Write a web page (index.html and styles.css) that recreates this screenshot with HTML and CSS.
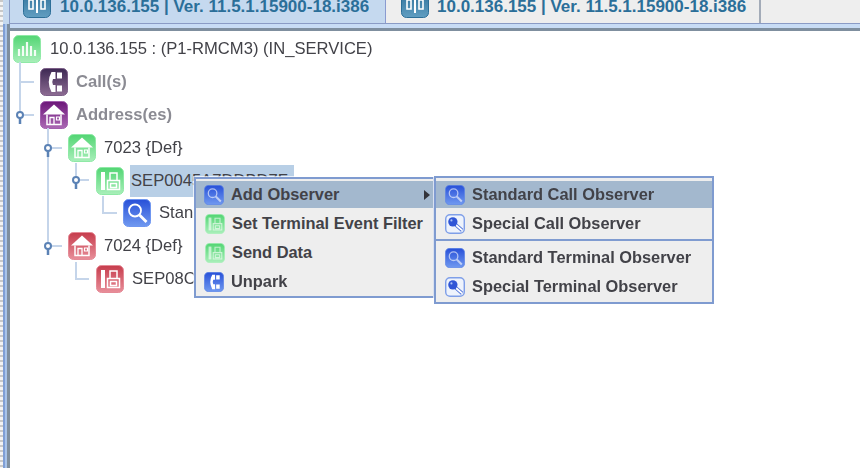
FILE: index.html
```html
<!DOCTYPE html>
<html lang="en">
<head>
<meta charset="utf-8">
<title>10.0.136.155</title>
<link rel="stylesheet" href="styles.css">
</head>
<body>
<svg class="defs" width="0" height="0" aria-hidden="true">
  <defs>
    <linearGradient id="g-green" x1="0" y1="0" x2="0" y2="1"><stop offset="0" stop-color="#52d573"/><stop offset="1" stop-color="#a9efba"/></linearGradient>
    <linearGradient id="g-dusk" x1="0" y1="0" x2="0" y2="1"><stop offset="0" stop-color="#3d2853"/><stop offset="1" stop-color="#8d6c93"/></linearGradient>
    <linearGradient id="g-purple" x1="0" y1="0" x2="0" y2="1"><stop offset="0" stop-color="#6c1679"/><stop offset="1" stop-color="#ab69b4"/></linearGradient>
    <linearGradient id="g-red" x1="0" y1="0" x2="0" y2="1"><stop offset="0" stop-color="#c63c4c"/><stop offset="1" stop-color="#e88f9a"/></linearGradient>
    <linearGradient id="g-blue" x1="0" y1="0" x2="0" y2="1"><stop offset="0" stop-color="#2850d8"/><stop offset="1" stop-color="#7099f0"/></linearGradient>
    <linearGradient id="g-teal" x1="0" y1="0" x2="0" y2="1"><stop offset="0" stop-color="#2d6f98"/><stop offset="1" stop-color="#619ec1"/></linearGradient>
    <symbol id="chart" viewBox="0 0 28 28">
      <path d="M6 14v7M10 11v10M14 7v14M18 11v10M22 15v6" fill="none" stroke="#fff" stroke-opacity=".9" stroke-width="2.200"/>
    </symbol>
    <symbol id="chart-boxed" viewBox="0 0 28 28">
      <path d="M6 10h4v9H6zM18 10h4v9h-4z" fill="none" stroke="#fff" stroke-width="1.600"/>
      <path d="M14 5v18" stroke="#fff" stroke-width="2"/>
    </symbol>
    <symbol id="phone" viewBox="0 0 28 28">
      <path d="M11.500 4h4v7h-2.500q-1.500 3 0 6h2.500v7h-4q-5.500-10 0-20z" fill="#fff"/>
      <path d="M17 4.500h5v6h-5zM17 17.500h5v6h-5z" fill="#fff"/>
    </symbol>
    <symbol id="house" viewBox="0 0 28 28">
      <path d="M14 3.500 25 13.500H3z" fill="#fff"/>
      <path d="M7 13.500v10h14v-10" fill="none" stroke="#fff" stroke-width="1.500"/>
      <path d="M10 23.500v-7h4v7" fill="none" stroke="#fff" stroke-width="1.300"/>
      <path d="M16.500 16h3v3h-3z" fill="none" stroke="#fff" stroke-width="1.200"/>
    </symbol>
    <symbol id="device" viewBox="0 0 28 28">
      <path d="M5 5h4v18H5z" fill="#fff"/>
      <path d="M11.500 13.500h12v9h-12zM14 13V6h7v7M14.500 16.500h6v4h-6z" fill="none" stroke="#fff" stroke-width="1.500"/>
    </symbol>
    <symbol id="search" viewBox="0 0 28 28">
      <circle cx="12" cy="11.500" r="6" fill="none" stroke="#fff" stroke-width="1.800"/>
      <path d="M16.500 16 23.500 23" stroke="#fff" stroke-width="2.800"/>
    </symbol>
    <symbol id="key-search" viewBox="0 0 28 28">
      <path d="M15 15 24 23" stroke="#4a6fd8" stroke-width="5"/>
      <path d="M15 15 24 23" stroke="#fff" stroke-width="2.600"/>
      <circle cx="11" cy="11" r="6.500" fill="#2f55d6"/>
      <circle cx="9" cy="9" r="1.500" fill="#a9c0f5"/>
    </symbol>
  </defs>
</svg>

<div class="app">
  <div class="rail"></div>
  <div class="main">
    <div class="tabs">
      <div class="tab tab-active">
        <svg class="icon" viewBox="0 0 28 28"><rect x=".5" y=".5" width="27" height="27" rx="5" fill="url(#g-teal)" stroke="#2d6f98"/><use href="#chart-boxed"/></svg>
        <span class="tab-text">10.0.136.155 | Ver. 11.5.1.15900-18.i386</span>
      </div>
      <div class="tab tab-idle">
        <svg class="icon" viewBox="0 0 28 28"><rect x=".5" y=".5" width="27" height="27" rx="5" fill="url(#g-teal)" stroke="#2d6f98"/><use href="#chart-boxed"/></svg>
        <span class="tab-text">10.0.136.155 | Ver. 11.5.1.15900-18.i386</span>
      </div>
    </div>
    <div class="band"></div>

    <div class="tree">
      <div class="row row-root">
        <svg class="icon" viewBox="0 0 28 28"><rect x=".5" y=".5" width="27" height="27" rx="5" fill="url(#g-green)" stroke="#8fe9a6"/><use href="#chart"/></svg>
        <span class="label">10.0.136.155 : (P1-RMCM3) (IN_SERVICE)</span>
      </div>
      <div class="row depth-1">
        <svg class="icon" viewBox="0 0 28 28"><rect x=".5" y=".5" width="27" height="27" rx="5" fill="url(#g-dusk)" stroke="#7d5f88"/><use href="#phone"/></svg>
        <span class="label label-group">Call(s)</span>
      </div>
      <div class="row depth-1">
        <svg class="icon" viewBox="0 0 28 28"><rect x=".5" y=".5" width="27" height="27" rx="5" fill="url(#g-purple)" stroke="#a25fae"/><use href="#house"/></svg>
        <span class="label label-group">Address(es)</span>
      </div>
      <div class="row depth-2">
        <svg class="icon" viewBox="0 0 28 28"><rect x=".5" y=".5" width="27" height="27" rx="5" fill="url(#g-green)" stroke="#8fe9a6"/><use href="#house"/></svg>
        <span class="label">7023 {Def}</span>
      </div>
      <div class="row depth-3">
        <svg class="icon" viewBox="0 0 28 28"><rect x=".5" y=".5" width="27" height="27" rx="5" fill="url(#g-green)" stroke="#8fe9a6"/><use href="#device"/></svg>
        <span class="label label-selected">SEP0045A7DDBD7F</span>
      </div>
      <div class="row depth-4">
        <svg class="icon" viewBox="0 0 28 28"><rect x=".5" y=".5" width="27" height="27" rx="5" fill="url(#g-blue)" stroke="#6f96f0"/><use href="#search"/></svg>
        <span class="label">Stan</span>
      </div>
      <div class="row depth-2">
        <svg class="icon" viewBox="0 0 28 28"><rect x=".5" y=".5" width="27" height="27" rx="5" fill="url(#g-red)" stroke="#e58a96"/><use href="#house"/></svg>
        <span class="label">7024 {Def}</span>
      </div>
      <div class="row depth-3">
        <svg class="icon" viewBox="0 0 28 28"><rect x=".5" y=".5" width="27" height="27" rx="5" fill="url(#g-red)" stroke="#e58a96"/><use href="#device"/></svg>
        <span class="label">SEP08C</span>
      </div>
    </div>
  </div>

  <svg class="connectors" viewBox="0 0 130 300" aria-hidden="true">
    <g class="line">
      <path d="M20 62V115M20 82H34M20 115H34"/>
      <path d="M48 128V246M48 148H62M48 246H62"/>
      <path d="M76 163V180M76 180H89"/>
      <path d="M103 196V213H117"/>
      <path d="M76 262V279H89"/>
    </g>
    <g class="knob">
      <path d="M20 115v9"/><circle cx="20" cy="115" r="3"/>
      <path d="M48 148v9"/><circle cx="48" cy="148" r="3"/>
      <path d="M76 180v9"/><circle cx="76" cy="180" r="3"/>
      <path d="M48 246v9"/><circle cx="48" cy="246" r="3"/>
    </g>
  </svg>

  <div class="menu menu-main">
    <div class="item item-active">
      <svg class="mini" viewBox="0 0 28 28"><rect x=".5" y=".5" width="27" height="27" rx="6" fill="url(#g-blue)" stroke="#5f86e6"/><use class="glyph-soft" href="#search"/></svg>
      <span>Add Observer</span>
      <i class="arrow"></i>
    </div>
    <div class="item item-inset">
      <svg class="mini" viewBox="0 0 28 28"><rect x=".5" y=".5" width="27" height="27" rx="6" fill="url(#g-green)" stroke="#a9efba"/><use class="glyph-soft" href="#device"/></svg>
      <span>Set Terminal Event Filter</span>
    </div>
    <div class="item item-inset">
      <svg class="mini" viewBox="0 0 28 28"><rect x=".5" y=".5" width="27" height="27" rx="6" fill="url(#g-green)" stroke="#a9efba"/><use class="glyph-soft" href="#device"/></svg>
      <span>Send Data</span>
    </div>
    <div class="item">
      <svg class="mini" viewBox="0 0 28 28"><rect x=".5" y=".5" width="27" height="27" rx="6" fill="url(#g-blue)" stroke="#5f86e6"/><use href="#phone"/></svg>
      <span>Unpark</span>
    </div>
  </div>

  <div class="menu menu-sub">
    <div class="item item-active">
      <svg class="mini" viewBox="0 0 28 28"><rect x=".5" y=".5" width="27" height="27" rx="6" fill="url(#g-blue)" stroke="#5f86e6"/><use class="glyph-soft" href="#search"/></svg>
      <span>Standard Call Observer</span>
    </div>
    <div class="item">
      <svg class="mini" viewBox="0 0 28 28"><rect x="1" y="1" width="26" height="26" rx="6" fill="#eef3fc" stroke="#7f9fe8" stroke-width="2"/><use href="#key-search"/></svg>
      <span>Special Call Observer</span>
    </div>
    <div class="divider"></div>
    <div class="item">
      <svg class="mini" viewBox="0 0 28 28"><rect x=".5" y=".5" width="27" height="27" rx="6" fill="url(#g-blue)" stroke="#5f86e6"/><use class="glyph-soft" href="#search"/></svg>
      <span>Standard Terminal Observer</span>
    </div>
    <div class="item">
      <svg class="mini" viewBox="0 0 28 28"><rect x="1" y="1" width="26" height="26" rx="6" fill="#eef3fc" stroke="#7f9fe8" stroke-width="2"/><use href="#key-search"/></svg>
      <span>Special Terminal Observer</span>
    </div>
  </div>
</div>
</body>
</html>
```
FILE: styles.css
```css
* { box-sizing: border-box; }

html, body {
  margin: 0;
  height: 100%;
  background: #fff;
}

.defs { position: absolute; }

.app {
  position: relative;
  display: flex;
  width: 860px;
  height: 468px;
  overflow: hidden;
  font-family: "Liberation Sans", Arial, sans-serif;
  font-size: 16.6px;
  color: #424248;
  filter: blur(0.4px);
}

.rail {
  flex: 0 0 10px;
  display: flex;
  flex-direction: column;
  background:
    linear-gradient(90deg, transparent 0 3px, #7f9fd6 3px 5px, #a9c4ea 5px 7px, #7f8f9f 7px 10px),
    repeating-linear-gradient(180deg, #c9c9c9 0 2px, #f4f4f4 2px 5px);
}

.rail::before {
  content: "";
  height: 24px;
  margin-left: 3px;
  background: linear-gradient(90deg, #c5d9ef 0 6px, #8a9bc5 6px 7px);
}

.main {
  flex: 1;
  display: flex;
  flex-direction: column;
  min-width: 0;
}

.tabs {
  flex: 0 0 24px;
  display: flex;
  background: #eeeeee;
  border-bottom: 1px solid #8a9bc5;
}

.tab {
  display: flex;
  align-items: center;
  gap: 9px;
  height: 23px;
  padding-left: 13px;
  padding-bottom: 15px;
  font-size: 17px;
  font-weight: 700;
  color: #2b6f99;
  overflow: hidden;
  white-space: nowrap;
}

.tab-text {
  margin-top: 5px;
}

.tab-active {
  flex: 0 0 375px;
  background: #c5d9ef;
}

.tab-idle {
  flex: 0 0 376px;
  gap: 8px;
  padding-left: 15px;
  background: #eeeeee;
  border-left: 1px solid #8a9bd0;
  border-right: 2px solid #a3abb8;
}

.band {
  flex: 0 0 7px;
  background: linear-gradient(180deg, #c8dcf5 0 4px, #7f8f9f 4px 7px);
}

.icon {
  flex: none;
  width: 28px;
  height: 28px;
}

.tree {
  flex: 1;
  padding: 2px 0 0 3px;
}

.row {
  display: flex;
  align-items: center;
  gap: 8px;
  height: 32.8px;
}

.row-root { gap: 9px; }
.depth-1 { padding-left: 27px; }
.depth-2 { padding-left: 55px; }
.depth-3 { padding-left: 83px; }
.depth-4 { padding-left: 110px; }

.label {
  white-space: nowrap;
}

.label-group {
  font-weight: 700;
  color: #8b8b93;
}

.label-selected {
  display: flex;
  align-items: center;
  height: 32px;
  padding: 0 6px 0 1px;
  margin-left: -2px;
  background: #b8cfe6;
}

.connectors {
  position: absolute;
  left: 0;
  top: 0;
  width: 130px;
  height: 300px;
}

.connectors path {
  fill: none;
}

.line path {
  stroke: #c5d5ea;
  stroke-width: 2;
}

.knob path {
  stroke: #5b82b5;
  stroke-width: 2.500;
}

.knob circle {
  fill: #fff;
  stroke: #5b82b5;
  stroke-width: 2;
}

.menu {
  position: absolute;
  background: #eeeeee;
  border: 2px solid #7f9bd0;
  font-size: 16.4px;
  font-weight: 700;
  color: #424248;
  outline: 1px solid rgba(255, 255, 255, 0.7);
}

.menu-main {
  left: 194px;
  top: 177px;
  width: 241px;
  height: 121px;
  padding-top: 2px;
}

.menu-sub {
  left: 434px;
  top: 176px;
  width: 280px;
  height: 128px;
  padding-top: 3px;
}

.item {
  display: flex;
  align-items: center;
  gap: 7px;
  height: 29px;
  padding-left: 8px;
  white-space: nowrap;
}

.menu-sub .item {
  padding-left: 9px;
  gap: 7px;
}

.item-inset {
  padding-left: 9px;
}

.item-active {
  height: 27px;
  margin-bottom: 1px;
  background: #a3b8ce;
}

.mini {
  flex: none;
  width: 20px;
  height: 20px;
}

.glyph-soft {
  opacity: 0.6;
}

.arrow {
  margin-left: auto;
  margin-right: 3px;
  width: 0;
  height: 0;
  border-left: 6px solid #33333a;
  border-top: 5px solid transparent;
  border-bottom: 5px solid transparent;
}

.divider {
  height: 2px;
  margin: 1px 0 2px;
  background: #7f9bd0;
}
```
